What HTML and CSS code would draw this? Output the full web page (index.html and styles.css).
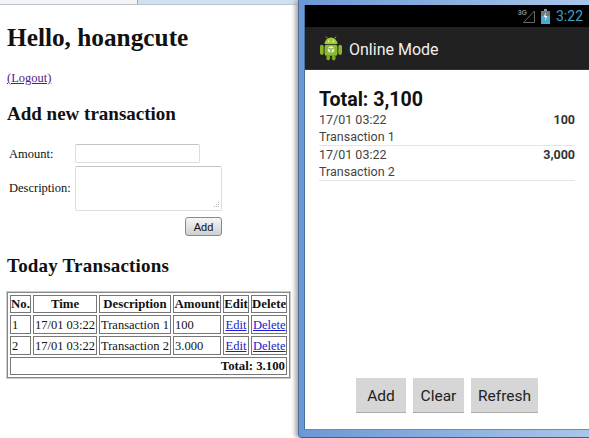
FILE: index.html
```html
<!DOCTYPE html>
<html lang="en">
<head>
<meta charset="utf-8">
<title>Online Mode</title>
<link rel="stylesheet" href="styles.css">
</head>
<body>
<main class="web">
  <div class="chrome"><div class="field"></div></div>
  <div class="page">
  <h1>Hello, hoangcute</h1>
  <p class="logout"><a href="#" class="visited">(Logout)</a></p>
  <h2 class="h-add">Add new transaction</h2>
  <form class="form">
    <label class="lbl-amount">Amount:</label>
    <input class="inp" type="text">
    <label class="lbl-desc">Description:</label>
    <div class="ta"><svg class="grip" width="8" height="8" viewBox="0 0 8 8"><g fill="#b5b5b5"><rect x="6" y="1" width="1" height="1"/><rect x="6" y="3" width="1" height="1"/><rect x="4" y="3" width="1" height="1"/><rect x="6" y="5" width="1" height="1"/><rect x="4" y="5" width="1" height="1"/><rect x="2" y="5" width="1" height="1"/></g></svg></div>
    <button class="add" type="button">Add</button>
  </form>
  <h2 class="h-today">Today Transactions</h2>
  <table class="tbl">
    <thead><tr><th class="c1">No.</th><th class="c2">Time</th><th class="c3">Description</th><th class="c4">Amount</th><th class="c5">Edit</th><th class="c6">Delete</th></tr></thead>
    <tbody>
      <tr><td>1</td><td>17/01 03:22</td><td>Transaction 1</td><td>100</td><td class="link"><a href="#">Edit</a></td><td class="link"><a href="#">Delete</a></td></tr>
      <tr><td>2</td><td>17/01 03:22</td><td>Transaction 2</td><td>3.000</td><td class="link"><a href="#">Edit</a></td><td class="link"><a href="#">Delete</a></td></tr>
      <tr><td colspan="6" class="total">Total: 3.100</td></tr>
    </tbody>
  </table>
  </div>
</main>
<section class="window">
  <div class="frame">
  <div class="status">
    <span class="net">3G</span>
    <svg class="signal" width="12" height="13" viewBox="0 0 12 13"><path d="M.5 12.5H11.5V1Z" fill="none" stroke="#6a6a6a" stroke-width="1"/></svg>
    <svg class="battery" width="9" height="15" viewBox="0 0 9 15"><rect x="3" y="0" width="3" height="2" fill="#999"/><rect x="0" y="2" width="9" height="5" fill="#6d7a80"/><rect x="0" y="7" width="9" height="8" fill="#4aa9cf"/><path d="M5 3 2.5 8H4.5L4 12 6.5 7H4.5Z" fill="#e8f4f8"/></svg>
    <span class="clock">3:22</span>
  </div>
  <header class="bar">
    <svg class="droid" width="22" height="25" viewBox="0 0 24 26">
      <rect x="0" y="9" width="4" height="11" rx="2" fill="#8cb52c"/>
      <rect x="20" y="9" width="4" height="11" rx="2" fill="#8cb52c"/>
      <path d="M5 8a7 7 0 0 1 14 0Z" fill="#9fca3a"/>
      <path d="M8 2 6.5 0M16 2 17.5 0" stroke="#9fca3a" stroke-width="1"/>
      <rect x="5" y="9" width="14" height="12" rx="2" fill="#8dbb2e"/>
      <rect x="7" y="20" width="4" height="6" rx="2" fill="#7fa828"/>
      <rect x="13" y="20" width="4" height="6" rx="2" fill="#7fa828"/>
      <circle cx="12" cy="14" r="3.5" fill="#e6efd0"/>
      <path d="M12 14V17.5M9 12.5 12 14 15 12.5" stroke="#6d8f2a" stroke-width="1" fill="none"/>
      <circle cx="9.5" cy="5" r="0.8" fill="#fff"/>
      <circle cx="14.5" cy="5" r="0.8" fill="#fff"/>
    </svg>
    <span class="app-title">Online Mode</span>
  </header>
  <div class="content">
    <div class="sum">Total: 3,100</div>
    <div class="tx">
      <div class="tx-top"><span>17/01 03:22</span><b>100</b></div>
      <div>Transaction 1</div>
    </div>
    <div class="tx">
      <div class="tx-top"><span>17/01 03:22</span><b>3,000</b></div>
      <div>Transaction 2</div>
    </div>
    <div class="btns">
      <button class="abtn b-add" type="button">Add</button>
      <button class="abtn b-clear" type="button">Clear</button>
      <button class="abtn b-refresh" type="button">Refresh</button>
    </div>
  </div>
  </div>
</section>
</body>
</html>
```
FILE: styles.css
```css
* { box-sizing: border-box; }
html, body { margin: 0; height: 100%; }
body {
  width: 589px; height: 438px; overflow: hidden; background: #fff;
  display: flex; font-family: "Liberation Serif", serif; color: #111;
}
.web { width: 298px; flex: none; font-size: 12.5px; overflow: hidden; }
.chrome { height: 5px; background: #cfe0ef; border-bottom: 1px solid #b8c4d0; }
.field { width: 138px; height: 4px; background: #f4f4f4; border-right: 1px solid #a8a8a8; }
.page { padding-left: 7px; }
h1 { margin: 18px 0 0; font-size: 25.3px; line-height: 28px; }
.logout { margin: 20px 0 0; line-height: 14px; }
.visited { color: #551a8b; }
h2 { margin: 0; font-size: 19px; line-height: 22px; }
.h-add { margin-top: 18px; }
.form {
  display: grid; grid-template-columns: 66px 125px 22px; margin: 19px 0 0 2px;
  align-items: center; row-gap: 3px;
}
.inp {
  grid-column: 2 / span 2; width: 125px; height: 19px; border: 1px solid #ddd;
  border-top-color: #c4c4c4; border-radius: 2px; padding: 0; background: #fff;
}
.lbl-desc { align-self: start; margin-top: 15px; }
.lbl-amount, .lbl-desc { line-height: 14px; }
.ta {
  grid-column: 2 / span 2; width: 147px; height: 45px; border: 1px solid #ddd;
  border-top-color: #c4c4c4; border-radius: 2px; position: relative;
}
.grip { position: absolute; right: 1px; bottom: 1px; }
.add {
  grid-column: 2 / span 2; justify-self: end; width: 37px; height: 19px; padding: 0; margin: 3px 0 0;
  border: 1px solid #8a8a8a; border-radius: 3px; font: 11px "Liberation Sans", sans-serif; color: #111;
  background: linear-gradient(#f6f6f6, #e2e2e2 50%, #cfcfcf);
}
.h-today { margin-top: 19px; letter-spacing: .2px; }
.tbl {
  margin: 15px 0 0 0; width: 283px; border: 1px solid #888;
  border-collapse: separate; border-spacing: 2px; font-size: 12.5px; box-shadow: 0 0 0 1px #ccc;
  table-layout: fixed;
}
.tbl th, .tbl td { border: 1px solid #777; line-height: 14px; white-space: nowrap; overflow: hidden; }
.tbl th { font-size: 12.8px; padding: 1px 0; height: 18px; }
.tbl td { padding: 1px; height: 19px; }
.c1 { width: 21px; }
.c2 { width: 64px; }
.c3 { width: 72px; }
.c4 { width: 48px; }
.c5 { width: 26px; }
.c6 { width: 36px; }
.tbl a { color: #1a1acc; }
.tbl .link { text-align: center; }
.tbl .total { text-align: right; font-weight: 700; font-size: 12.8px; height: 18px; }
.window {
  width: 291px; flex: none; height: 438px; padding: 5px 0 7px 5px;
  background: linear-gradient(90deg, #6b98d4, #a9c6ea);
  border-left: 1px solid #4a6a98; border-bottom: 1px solid #3e5f90; border-bottom-left-radius: 4px;
  box-shadow: -3px 0 4px #aaa;
}
.frame {
  height: 100%; display: flex; flex-direction: column; background: #fff;
  border-left: 1px solid #46719f; border-bottom: 1px solid #5f8fc8;
}
.status {
  height: 22px; background: #000; display: flex; align-items: center; justify-content: flex-end;
  padding-right: 6px; flex: none;
}
.net { font: 700 7px "Liberation Sans", sans-serif; color: #888; align-self: flex-start; margin: 4px -4px 0 0; }
.signal { margin-right: 6px; }
.battery { margin-right: 6px; }
.clock { font: 14px Roboto, sans-serif; color: #3fa3c8; }
.bar {
  height: 43px; background: #212121; border-bottom: 1px solid #333; display: flex; align-items: center;
  padding: 1px 0 0 15px; flex: none; gap: 7px;
}
.app-title { font: 16px Roboto, sans-serif; color: #f0f0f0; margin-top: 2px; }
.content { flex: 1; display: flex; flex-direction: column; padding: 19px 14px 16px 14px; font: 12.5px Roboto, sans-serif; color: #444; }
.sum { font: 700 19.6px/22px Roboto, sans-serif; color: #111; }
.tx { border-bottom: 1px solid #e4e4e4; line-height: 17px; }
.tx-top { display: flex; justify-content: space-between; }
.tx-top b { color: #333; font-weight: 700; }
.btns { margin-top: auto; display: flex; justify-content: center; gap: 7px; }
.abtn {
  height: 35px; padding: 1px 0 0; border: 0; border-bottom: 1px solid #aaa; background: #d6d6d6;
  font: 15.5px Roboto, sans-serif; color: #222;
}
.b-add { width: 50px; }
.b-clear { width: 51px; }
.b-refresh { width: 67px; }
```
